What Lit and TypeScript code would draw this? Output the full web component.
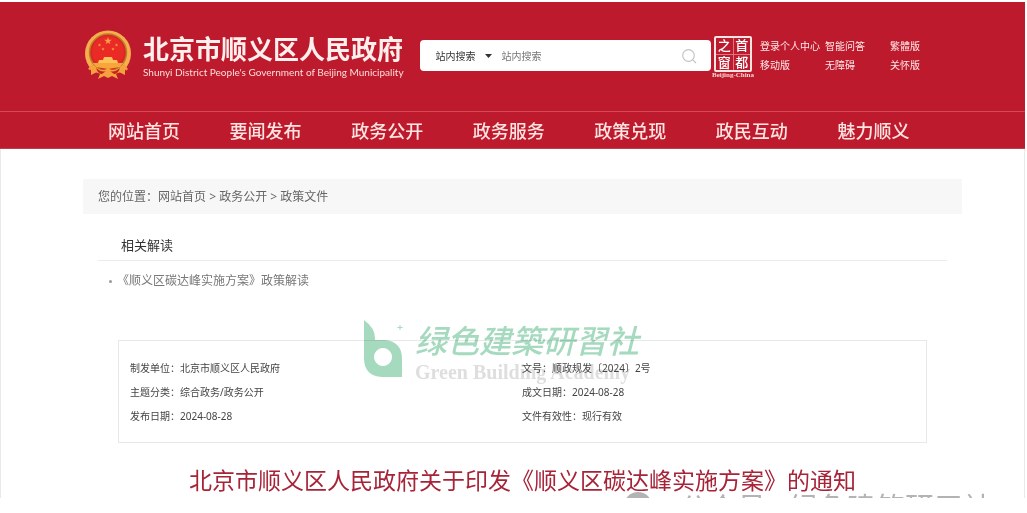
import { LitElement, html, css, svg } from "lit";
import { customElement } from "lit/decorators.js";

const NAV = ["网站首页", "要闻发布", "政务公开", "政务服务", "政策兑现", "政民互动", "魅力顺义"];
const LINKS = ["登录个人中心", "智能问答", "繁體版", "移动版", "无障碍", "关怀版"];
const INFO = [
  ["制发单位：", "北京市顺义区人民政府"],
  ["文号：", "顺政规发〔2024〕2号"],
  ["主题分类：", "综合政务/政务公开"],
  ["成文日期：", "2024-08-28"],
  ["发布日期：", "2024-08-28"],
  ["文件有效性：", "现行有效"],
];

const star = (x: number, y: number, r: number) => {
  const pts = Array.from({ length: 10 }, (_, i) => {
    const a = (Math.PI * i) / 5 - Math.PI / 2;
    const k = i % 2 ? r * 0.4 : r;
    return `${(x + k * Math.cos(a)).toFixed(2)},${(y + k * Math.sin(a)).toFixed(2)}`;
  }).join(" ");
  return svg`<polygon points=${pts} fill="#f9a04a" />`;
};

@customElement("site-header")
class SiteHeader extends LitElement {
  static styles = css`
    :host { display: block; background: #bd1a2d; color: #fff; }
    a { color: inherit; text-decoration: none; }
    .top { display: flex; align-items: flex-start; padding: 28px 104px 0 84px; height: 109px; box-sizing: border-box; }
    .emblem { width: 48px; height: 50px; flex: none; }
    .brand { margin: 4px 16px 0 11px; flex: none; white-space: nowrap; }
    .name { margin: 0; font-size: 26px; line-height: 30px; font-weight: 700; color: #fff0ee; }
    .sub { margin: 0; font-size: 10px; line-height: 16px; font-family: Lato, "Open Sans", sans-serif; color: #ffdcd9; }
    .search { flex: 1; min-width: 0; display: flex; align-items: center; height: 31px; margin-top: 10px; padding: 0 14px 0 16px; background: #fff; border-radius: 4px; box-sizing: border-box; }
    .scope { appearance: none; border: 0; margin: 0; padding: 0; width: 44px; background: none; font: inherit; font-size: 10px; line-height: 16px; color: #333; }
    .caret { width: 7px; height: 4px; margin: 0 10px 0 5px; flex: none; }
    .box { flex: 1; min-width: 0; border: 0; padding: 0; background: none; font: inherit; font-size: 10px; line-height: 16px; outline: none; color: #333; }
    .box::placeholder { color: #777; opacity: 1; }
    .go { border: 0; padding: 0; background: none; width: 16px; height: 16px; flex: none; }
    .go svg { display: block; }
    .seal { flex: none; width: 42px; margin: 6px 6px 0 1px; display: flex; flex-direction: column; align-items: center; }
    .grid { display: grid; grid-template-columns: 1fr 1fr; width: 38px; height: 36px; box-sizing: border-box; border: 2px solid #fbe4e2; gap: 1px; background: #dd7680; border-radius: 2px; }
    .cell { background: #bd1a2d; font-size: 13px; line-height: 15px; font-weight: 500; text-align: center; }
    .cap { font: 700 7px/7px "Liberation Serif", serif; white-space: nowrap; color: #fbd5d3; }
    .links { flex: none; display: grid; grid-template-columns: 65px 65px 31px; font-size: 10px; line-height: 19px; margin-top: 7px; white-space: nowrap; color: #ffe9e7; }
    .nav { display: grid; grid-template-columns: repeat(7, 1fr); border-top: 1px solid #d64a58; border-bottom: 1px solid #b9404d; padding: 2px 66px 0 108px; font-size: 18px; line-height: 34px; font-weight: 500; white-space: nowrap; color: #ffe4e1; }
  `;
  render() {
    return html`
      <div class="top">
        <svg class="emblem" viewBox="0 0 48 50" role="img" aria-label="国徽">
          <path d="M9 36 L5 40 L8 41 L8 45 L14 42 L17 44 L15 49 L21 45 L24 47 L28 45 L33 49 L32 44 L35 42 L40 45 L40 41 L44 40 L39 36Z" fill="#ef8a35" />
          <circle cx="24" cy="23.500" r="23" fill="#f8ad4e" />
          <circle cx="24" cy="22.500" r="18.500" fill="#d8262a" stroke="#b98122" stroke-width="1.500" />
          <circle cx="24" cy="22" r="16" fill="#ea2a25" />
          ${star(24, 11, 4)} ${star(15.5, 15, 1.8)} ${star(19, 19, 1.8)} ${star(29, 19, 1.8)} ${star(32.5, 15, 1.8)}
          <path d="M20 27h8l1 3h4l1 3H14l1-3h4z" fill="#fbc25a" />
          <path d="M9 33h30l-3 4-12 2-12-2z" fill="#f7a63c" />
          <path d="M6 38q9 9 18 3 9 6 18-3l-1 12H7z" fill="#bd1a2d" />
          <path d="M8 34q8 10 16 4 8 6 16-4l4 5-3 1v5l-6-3-3 2 2 5-6-3-4 2-4-2-6 3 2-5-3-2-6 3v-5l-3-1z" fill="#f5a13e" />
          <path d="M12 38q6 5 10 3l-4 3q-4 0-6-6zM36 38q-6 5-10 3l4 3q4 0 6-6z" fill="#c8241f" />
        </svg>
        <div class="brand">
          <h1 class="name">北京市顺义区人民政府</h1>
          <p class="sub">Shunyi District People's Government of Beijing Municipality</p>
        </div>
        <form class="search" role="search" @submit=${(e: Event) => e.preventDefault()}>
          <select class="scope" aria-label="搜索范围"><option>站内搜索</option></select>
          <svg class="caret" viewBox="0 0 7 4"><path d="M0 0h7L3.500 4z" fill="#333" /></svg>
          <input class="box" type="text" aria-label="站内搜索" placeholder="站内搜索" />
          <button class="go" aria-label="搜索">
            <svg width="16" height="16" viewBox="0 0 16 16" fill="none" stroke="#c4c4c4" stroke-width="1.200"><circle cx="7.500" cy="7.500" r="5.800" /><path d="M11.800 11.800 15 15" /></svg>
          </button>
        </form>
        <a class="seal" href="#" aria-label="首都之窗">
          <span class="grid"><span class="cell">之</span><span class="cell">首</span><span class="cell">窗</span><span class="cell">都</span></span>
          <span class="cap">Beijing-China</span>
        </a>
        <div class="links">${LINKS.map((t) => html`<a href="#">${t}</a>`)}</div>
      </div>
      <nav class="nav">${NAV.map((t) => html`<a href="#">${t}</a>`)}</nav>
    `;
  }
}

@customElement("policy-page")
class PolicyPage extends LitElement {
  static styles = css`
    :host { display: block; position: relative; overflow: hidden; border: solid #e9e9e9; border-width: 0 1px; padding: 30px 62px 0 82px; color: #444; }
    a { color: inherit; text-decoration: none; }
    .crumbs { background: #f7f7f7; padding: 0 15px; font-size: 12px; line-height: 35px; color: #666; white-space: pre; }
    .related { margin: 0 15px; }
    .heading { margin: 0; padding: 16px 23px 0; font-size: 13px; line-height: 30px; font-weight: 400; color: #333; border-bottom: 1px solid #ececec; }
    .list { margin: 0; padding: 10px 0 0; list-style: none; font-size: 12px; line-height: 20px; color: #777; }
    .item { display: flex; align-items: center; padding-left: 11px; gap: 5px; }
    .dot { width: 3px; height: 3px; background: #999; border-radius: 50%; }
    .info { position: relative; margin: 49px 35px 0; border: 1px solid #e8e8e8; padding: 15px 0 14px 11px; }
    .rows { position: relative; margin: 0; display: grid; grid-template-columns: 392px 1fr; font-size: 10px; line-height: 24px; color: #444; }
    .row { display: flex; white-space: nowrap; }
    .row dt, .row dd { margin: 0; }
    .mark { position: absolute; left: 245px; top: -21px; display: flex; gap: 12px; color: #a5dabf; mix-blend-mode: multiply; }
    .leaf { width: 39px; height: 58px; }
    .cn { font-size: 32px; line-height: 42px; font-weight: 500; font-style: italic; white-space: nowrap; }
    .en { font: 700 20px/20px "Liberation Serif", serif; color: #dedede; white-space: nowrap; }
    .title { margin: 20px 0 0; font-size: 23px; line-height: 35px; font-weight: 400; color: #a72338; text-align: center; white-space: nowrap; }
    .account { position: absolute; right: 32px; bottom: -32px; display: flex; align-items: center; gap: 27px; font-size: 29px; line-height: 44px; color: #b3b3b3; white-space: pre; }
    .chat { width: 28px; height: 28px; margin-bottom: 4px; }
  `;
  render() {
    return html`
      <nav class="crumbs">您的位置：<a href="#">网站首页</a> &gt; <a href="#">政务公开</a> &gt; <a href="#">政策文件</a></nav>
      <section class="related">
        <h2 class="heading">相关解读</h2>
        <ul class="list"><li class="item"><span class="dot"></span><a href="#">《顺义区碳达峰实施方案》政策解读</a></li></ul>
      </section>
      <section class="info">
        <div class="mark">
          <svg class="leaf" viewBox="0 0 39 58">
            <path fill-rule="evenodd" fill="currentColor" d="M0 0 Q11 8 11 18 V20 H20 Q38 21 38 39 V57 H18 Q0 56 0 38Z M19 28a9 9 0 1 0 .01 0z" />
            <path d="M36 5v5M33.500 7.500h5" stroke="currentColor" stroke-width="1" />
          </svg>
          <div>
            <div class="cn">绿色建築研習社</div>
            <div class="en">Green Building Academy</div>
          </div>
        </div>
        <dl class="rows">${INFO.map(([k, v]) => html`<div class="row"><dt>${k}</dt><dd>${v}</dd></div>`)}</dl>
      </section>
      <h1 class="title">北京市顺义区人民政府关于印发《顺义区碳达峰实施方案》的通知</h1>
      <div class="account">
        <svg class="chat" viewBox="0 0 28 28"><circle cx="14" cy="14" r="14" fill="currentColor" /><circle cx="11" cy="12" r="5" fill="#fff" /><circle cx="18" cy="17" r="4" fill="#fff" /></svg>
        <span>公众号 · 绿色建筑研习社</span>
      </div>
    `;
  }
}

@customElement("app-root")
class AppRoot extends LitElement {
  static styles = css`
    :host { display: block; padding: 2px 2px 15px 0; background: #fff; font-family: "Noto Sans", "Noto Sans CJK SC", sans-serif; }
  `;
  render() {
    return html`<site-header></site-header><policy-page></policy-page>`;
  }
}
